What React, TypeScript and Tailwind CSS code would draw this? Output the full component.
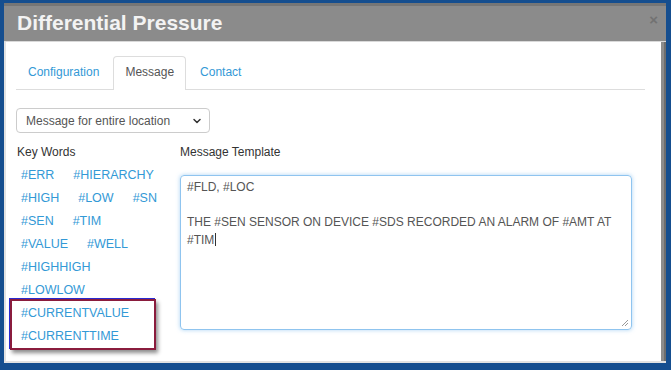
import { ChevronDown } from "lucide-react";

const keyRows = [
  ["#ERR", "#HIERARCHY"],
  ["#HIGH", "#LOW", "#SN"],
  ["#SEN", "#TIM"],
  ["#VALUE", "#WELL"],
  ["#HIGHHIGH"],
  ["#LOWLOW"],
];

const marked = ["#CURRENTVALUE", "#CURRENTTIME"];

function KeyRow({ words }: { words: string[] }) {
  return (
    <div className="flex h-[23px] items-center gap-x-[19px] pl-[5px]">
      {words.map((w) => (
        <span key={w} className="text-[12.5px] text-[#3399d6]">
          {w}
        </span>
      ))}
    </div>
  );
}

export default function App() {
  return (
    <div
      className="flex h-[370px] w-[671px] bg-[#154e8f] pb-[7px] pl-[4px] pr-[5px] pt-[3px]"
      style={{ fontFamily: '"Liberation Sans", Arial, sans-serif' }}
    >
      <div className="flex flex-1 flex-col bg-white">
        {/* title bar */}
        <div className="flex h-[38px] items-start justify-between border-t-[3px] border-[#767676] bg-[#8b8b8b] pl-[13px] pr-[8px] pt-[5px]">
          <h1 className="text-[21px] font-bold leading-[24px] text-[#f3f3f3]">
            Differential Pressure
          </h1>
          <span className="mt-[1px] text-[15px] font-bold leading-[15px] text-[#727272]">×</span>
        </div>
        <div className="h-px bg-[#d9d9d9]" />

        <div className="flex flex-1 border-b-[2px] border-l-[2px] border-[#e2e2e2]">
          <div className="flex-1 pl-[10px] pr-[16px] pt-[14px]">
            {/* tabs */}
            <div className="flex border-b border-[#dddddd] text-[12px] leading-[17px]">
              <div className="mr-[2px] px-[12px] pb-[8px] pt-[8px] text-[#3399d6]">Configuration</div>
              <div className="-mb-px mr-[2px] rounded-t-[4px] border border-b-0 border-[#dddddd] bg-white px-[11px] pb-[8px] pt-[7px] text-[#555555]">
                Message
              </div>
              <div className="px-[12px] pb-[8px] pt-[8px] text-[#3399d6]">Contact</div>
            </div>

            {/* select */}
            <div className="mt-[18px] flex h-[25px] w-[194px] items-center justify-between rounded-[4px] border border-[#cccccc] pl-[9px] pr-[6px] text-[12px] text-[#555555]">
              <span>Message for entire location</span>
              <ChevronDown size={12} strokeWidth={3} className="text-[#333]" />
            </div>

            <div className="mt-[8px] flex">
              {/* key words */}
              <div className="w-[164px]">
                <div className="h-[23px] pl-[1px] text-[12px] leading-[23px] text-[#333333]">Key Words</div>
                {keyRows.map((r, i) => (
                  <KeyRow key={i} words={r} />
                ))}
                <div className="-ml-[6px] -mt-[3px] w-[146px] border-2 border-[#8a1c3d] pt-[1px] shadow-[-1px_-1px_0_#2a2ad0,2px_3px_4px_rgba(0,0,0,0.45)]">
                  {marked.map((w) => (
                    <div key={w} className="flex h-[23px] items-center pl-[9px] text-[12.5px] text-[#3399d6]">
                      {w}
                    </div>
                  ))}
                </div>
              </div>

              {/* template */}
              <div className="mr-[13px] flex-1">
                <div className="h-[23px] text-[12px] leading-[23px] text-[#333333]">Message Template</div>
                <div className="relative mt-[11px] h-[155px] rounded-[4px] border border-[#8fc4ef] px-[6px] pt-[3px] text-[12px] leading-[17.5px] text-[#555555] shadow-[0_0_4px_rgba(102,175,233,0.55)]">
                  <div className="whitespace-pre-wrap">
                    {"#FLD, #LOC\n\nTHE #SEN SENSOR ON DEVICE #SDS RECORDED AN ALARM OF #AMT AT #TIM"}
                    <span className="ml-px inline-block h-[13px] w-px bg-[#333] align-[-2px]" />
                  </div>
                  <svg className="absolute bottom-[2px] right-[2px]" width="8" height="8" viewBox="0 0 8 8">
                    <path d="M7 1 1 7M7 4 4 7" stroke="#999" strokeWidth="1" />
                  </svg>
                </div>
              </div>
            </div>
          </div>
          {/* scroll edge */}
          <div className="w-[5px] border-r-[2px] border-[#6e6e6e] bg-[#8c8c8c]" />
        </div>
      </div>
    </div>
  );
}
